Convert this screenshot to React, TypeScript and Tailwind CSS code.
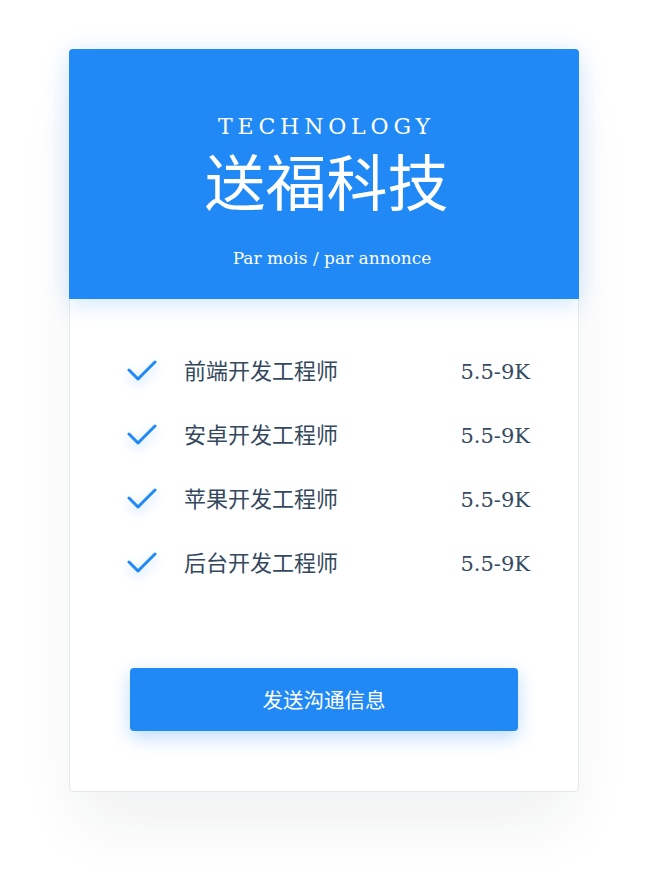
const jobs = [
  { title: "前端开发工程师", salary: "5.5-9K" },
  { title: "安卓开发工程师", salary: "5.5-9K" },
  { title: "苹果开发工程师", salary: "5.5-9K" },
  { title: "后台开发工程师", salary: "5.5-9K" },
];

const serif = "font-['DejaVu_Serif','Noto_Sans_CJK_SC',serif]";

const Check = () => (
  <svg
    className="w-[30px] h-[24px] drop-shadow-[0_4px_6px_rgba(32,137,245,0.35)]"
    viewBox="0 0 30 24"
    fill="none"
  >
    <polyline
      points="2,11 11,20 28,3"
      stroke="#2089f5"
      strokeWidth="3"
      strokeLinecap="round"
      strokeLinejoin="round"
    />
  </svg>
);

export default function App() {
  return (
    <div className="min-h-[881px] w-full bg-white pt-[49px]">
      <div className="mx-auto w-[510px] rounded-[4px] border border-[#e6e8eb] bg-white shadow-[0_40px_60px_-10px_rgba(30,40,60,0.07)]">
        <div className="flex h-[250px] flex-col items-center rounded-t-[4px] bg-[#2089f5] pt-[65px] text-white shadow-[0_4px_24px_rgba(32,137,245,0.22)] -mx-px -mt-px">
          <div className={`${serif} pl-[0.22em] text-[22px] leading-[26px] tracking-[0.22em]`}>TECHNOLOGY</div>
          <div className="mt-[10px] pl-[5px] font-['Noto_Sans_CJK_SC',sans-serif] text-[61px] leading-[60px]">送福科技</div>
          <div className={`${serif} mt-[38px] pl-[16px] text-[17px] leading-[20px]`}>Par mois / par annonce</div>
        </div>
        <div className="flex flex-col pl-[57px] pr-[48px] pt-[40px]">
          {jobs.map((job, index) => (
            <div key={index} className="flex h-[64px] items-center">
              <Check />
              <span className="mb-[4px] ml-[27px] font-['Noto_Sans_CJK_SC',sans-serif] text-[22px] leading-[30px] text-[#34495e]">
                {job.title}
              </span>
              <span className={`${serif} ml-auto mt-[2px] text-[21px] leading-[30px] text-[#34495e]`}>{job.salary}</span>
            </div>
          ))}
        </div>
        <div className="px-[60px] pb-[60px] pt-[73px]">
          <button className="flex h-[63px] w-full items-center justify-center rounded-[4px] bg-[#2089f5] font-['Noto_Sans_CJK_SC',sans-serif] text-[20.5px] text-white shadow-[0_6px_18px_rgba(32,137,245,0.3)]">
            发送沟通信息
          </button>
        </div>
      </div>
    </div>
  );
}
